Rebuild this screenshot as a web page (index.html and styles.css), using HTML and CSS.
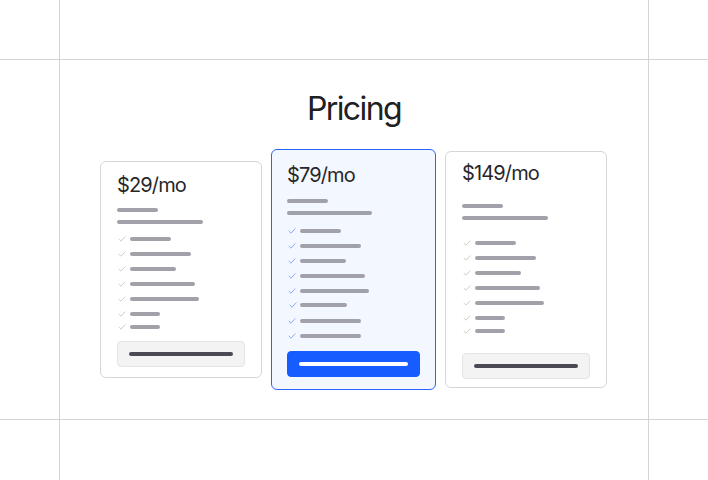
FILE: index.html
```html
<!DOCTYPE html>
<html lang="en">
<head>
<meta charset="utf-8">
<title>Pricing</title>
<link rel="stylesheet" href="styles.css">
</head>
<body>
<div class="stage">
  <h1 class="title">Pricing</h1>
  <div class="plans">
    <div class="card card-basic">
      <div class="price">$29/mo</div>
      <div class="desc"><span class="bar w41"></span><span class="bar w86"></span></div>
      <ul class="features">
        <li><svg class="check" viewBox="0 0 10 8"><polyline points="2,4.2 4,6.2 8,1.8"/></svg><span class="bar w41"></span></li>
        <li><svg class="check" viewBox="0 0 10 8"><polyline points="2,4.2 4,6.2 8,1.8"/></svg><span class="bar w61"></span></li>
        <li><svg class="check" viewBox="0 0 10 8"><polyline points="2,4.2 4,6.2 8,1.8"/></svg><span class="bar w46"></span></li>
        <li><svg class="check" viewBox="0 0 10 8"><polyline points="2,4.2 4,6.2 8,1.8"/></svg><span class="bar w65"></span></li>
        <li><svg class="check" viewBox="0 0 10 8"><polyline points="2,4.2 4,6.2 8,1.8"/></svg><span class="bar w69"></span></li>
        <li><svg class="check" viewBox="0 0 10 8"><polyline points="2,4.2 4,6.2 8,1.8"/></svg><span class="bar w30"></span></li>
        <li class="tight"><svg class="check" viewBox="0 0 10 8"><polyline points="2,4.2 4,6.2 8,1.8"/></svg><span class="bar w30"></span></li>
      </ul>
      <div class="btn btn-light"><span class="btn-bar"></span></div>
    </div>
    <div class="card card-pro">
      <div class="price">$79/mo</div>
      <div class="desc"><span class="bar w41"></span><span class="bar w85"></span></div>
      <ul class="features">
        <li><svg class="check" viewBox="0 0 10 8"><polyline points="2,4.2 4,6.2 8,1.8"/></svg><span class="bar w41"></span></li>
        <li><svg class="check" viewBox="0 0 10 8"><polyline points="2,4.2 4,6.2 8,1.8"/></svg><span class="bar w61"></span></li>
        <li><svg class="check" viewBox="0 0 10 8"><polyline points="2,4.2 4,6.2 8,1.8"/></svg><span class="bar w46"></span></li>
        <li><svg class="check" viewBox="0 0 10 8"><polyline points="2,4.2 4,6.2 8,1.8"/></svg><span class="bar w65"></span></li>
        <li><svg class="check" viewBox="0 0 10 8"><polyline points="2,4.2 4,6.2 8,1.8"/></svg><span class="bar w69"></span></li>
        <li class="nudge"><svg class="check" viewBox="0 0 10 8"><polyline points="2,4.2 4,6.2 8,1.8"/></svg><span class="bar w47"></span></li>
        <li><svg class="check" viewBox="0 0 10 8"><polyline points="2,4.2 4,6.2 8,1.8"/></svg><span class="bar w61"></span></li>
        <li><svg class="check" viewBox="0 0 10 8"><polyline points="2,4.2 4,6.2 8,1.8"/></svg><span class="bar w61"></span></li>
      </ul>
      <div class="btn btn-primary"><span class="btn-bar"></span></div>
    </div>
    <div class="card card-team">
      <div class="price">$149/mo</div>
      <div class="desc"><span class="bar w41"></span><span class="bar w86"></span></div>
      <ul class="features">
        <li><svg class="check" viewBox="0 0 10 8"><polyline points="2,4.2 4,6.2 8,1.8"/></svg><span class="bar w41"></span></li>
        <li><svg class="check" viewBox="0 0 10 8"><polyline points="2,4.2 4,6.2 8,1.8"/></svg><span class="bar w61"></span></li>
        <li><svg class="check" viewBox="0 0 10 8"><polyline points="2,4.2 4,6.2 8,1.8"/></svg><span class="bar w46"></span></li>
        <li><svg class="check" viewBox="0 0 10 8"><polyline points="2,4.2 4,6.2 8,1.8"/></svg><span class="bar w65"></span></li>
        <li><svg class="check" viewBox="0 0 10 8"><polyline points="2,4.2 4,6.2 8,1.8"/></svg><span class="bar w69"></span></li>
        <li><svg class="check" viewBox="0 0 10 8"><polyline points="2,4.2 4,6.2 8,1.8"/></svg><span class="bar w30"></span></li>
        <li class="tight"><svg class="check" viewBox="0 0 10 8"><polyline points="2,4.2 4,6.2 8,1.8"/></svg><span class="bar w30"></span></li>
      </ul>
      <div class="btn btn-light"><span class="btn-bar"></span></div>
    </div>
  </div>
</div>
</body>
</html>
```
FILE: styles.css
```css
* { box-sizing: border-box; }

html, body {
  margin: 0;
  height: 100%;
}

body {
  width: 708px;
  height: 480px;
  overflow: hidden;
  font-family: Inter, "Noto Sans", sans-serif;
  color: #222226;
  background-color: #ffffff;
  background-image:
    linear-gradient(to right, transparent 59px, #d4d4d4 59px, #d4d4d4 60px, transparent 60px),
    linear-gradient(to right, transparent 648px, #d4d4d4 648px, #d4d4d4 649px, transparent 649px),
    linear-gradient(to bottom, transparent 59px, #d4d4d4 59px, #d4d4d4 60px, transparent 60px),
    linear-gradient(to bottom, transparent 419px, #d4d4d4 419px, #d4d4d4 420px, transparent 420px);
  padding: 60px 60px 0 60px;
}

.stage {
  width: 588px;
  height: 359px;
  padding-top: 29px;
  display: flex;
  flex-direction: column;
  align-items: center;
}

.title {
  margin: 0;
  font-size: 32px;
  line-height: 40px;
  font-weight: 400;
  letter-spacing: -0.05em;
  color: #202022;
}

.plans {
  margin-top: 20px;
  align-self: stretch;
  padding-left: 40px;
  display: flex;
  align-items: center;
  gap: 9px;
}

.card {
  width: 162px;
  border: 1px solid #d6d6d6;
  border-radius: 6px;
  background: #ffffff;
  padding: 11px 16px 10px;
  display: flex;
  flex-direction: column;
}

.price {
  font-size: 20px;
  line-height: 24px;
  letter-spacing: -0.043em;
  color: #27272a;
}

.desc {
  display: flex;
  flex-direction: column;
  align-items: flex-start;
  gap: 8px;
  margin-top: 11px;
}

.bar {
  display: block;
  height: 4px;
  border-radius: 2px;
  background: #a1a1aa;
}

.w30 { width: 30px; }
.w41 { width: 41px; }
.w46 { width: 46px; }
.w47 { width: 47px; }
.w61 { width: 61px; }
.w65 { width: 65px; }
.w69 { width: 69px; }
.w85 { width: 85px; }
.w86 { width: 86px; }

.features {
  list-style: none;
  margin: 7px 0 0;
  padding: 0;
}

.features li {
  height: 15px;
  display: flex;
  align-items: center;
  gap: 3px;
}

.features li.tight { margin-top: -2px; }

.check {
  width: 10px;
  height: 8px;
  flex: none;
  fill: none;
  stroke: #c8c8cc;
  stroke-width: 0.9;
  stroke-linecap: round;
  stroke-linejoin: round;
}

.btn {
  margin-top: 7px;
  height: 26px;
  border-radius: 4px;
  padding: 0 11px;
  display: flex;
  align-items: center;
}

.btn-bar {
  display: block;
  width: 100%;
  height: 4px;
  border-radius: 2px;
}

.btn-light {
  background: #f3f3f4;
  border: 1px solid #e4e4e7;
}

.btn-light .btn-bar { background: #4a4a55; }

.btn-primary {
  background: #175cff;
  border: 1px solid #175cff;
}

.btn-primary .btn-bar { background: #ffffff; }

/* featured plan */
.card-pro {
  width: 165px;
  border-color: #2a64ff;
  background: #f3f7ff;
  padding: 13px 15px 12px;
}

.card-pro .desc { margin-top: 12px; }
.card-pro .features { margin-top: 8px; }
.card-pro .btn { margin-top: 8px; }
.card-pro .check { stroke: #7ea2ff; }
.card-pro .features li.nudge { margin-top: -1px; margin-bottom: 1px; }
.card-pro .features li.nudge .check { margin-left: 1px; margin-right: -1px; }

/* top plan */
.card-team {
  padding: 9px 16px 8px;
}

.card-team .desc { margin-top: 19px; }
.card-team .features { margin-top: 15px; }
.card-team .btn { margin-top: 15px; }
```
